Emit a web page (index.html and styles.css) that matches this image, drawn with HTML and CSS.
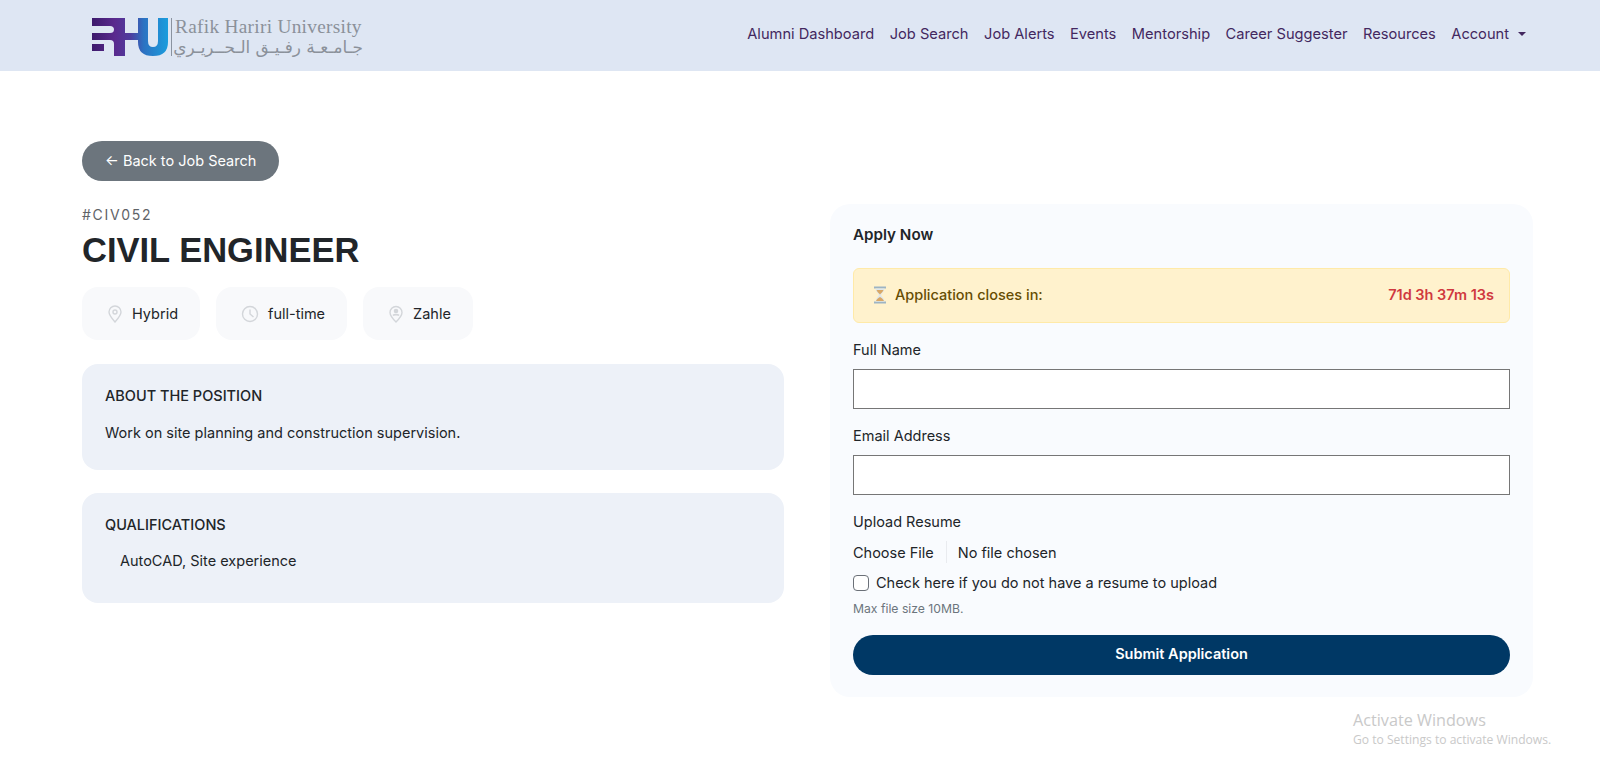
FILE: index.html
```html
<!DOCTYPE html>
<html>
<head>
    <title>Civil Engineer - Apply</title>
    <meta name="viewport" content="width=device-width, initial-scale=1">
    <link rel="stylesheet" href="styles.css">
</head>
<body>
    <nav class="navbar">
        <a class="brand" href="#">
            <svg class="brand-mark" width="76" height="38" viewBox="0 0 76 38">
                <defs>
                    <linearGradient id="rhuGrad" gradientUnits="userSpaceOnUse" x1="0" y1="0" x2="76" y2="0">
                        <stop offset="0" stop-color="#3d1a6c"/>
                        <stop offset="0.3" stop-color="#5a2a8e"/>
                        <stop offset="0.5" stop-color="#4f3b9e"/>
                        <stop offset="0.68" stop-color="#2c72c2"/>
                        <stop offset="1" stop-color="#1b9ddd"/>
                    </linearGradient>
                </defs>
                <path fill="url(#rhuGrad)" d="M0 0h33v15h13V0h10v23q0 6 5 6t5-6V0h10v24q0 14-15 14T46 24v-2H33v16H22V26q0-4-4-4H0v-7h18q4 0 4-3.500T18 8H0zM0 26h12v7H0z"/>
            </svg>
            <span class="brand-sep"></span>
            <span class="brand-text">
                <span class="brand-en">Rafik Hariri University</span>
                <span class="brand-ar" dir="rtl">جـامـعـة رفـيـق الـحــريـري</span>
            </span>
        </a>
        <ul class="nav-links">
            <li><a href="#">Alumni Dashboard</a></li>
            <li><a href="#">Job Search</a></li>
            <li><a href="#">Job Alerts</a></li>
            <li><a href="#">Events</a></li>
            <li><a href="#">Mentorship</a></li>
            <li><a href="#">Career Suggester</a></li>
            <li><a href="#">Resources</a></li>
            <li><a href="#" class="dropdown">Account</a></li>
        </ul>
    </nav>

    <main class="page">
        <a class="back-btn" href="#">← Back to Job Search</a>

        <div class="columns">
            <section class="job">
                <div class="job-code">#CIV052</div>
                <h1>CIVIL ENGINEER</h1>

                <div class="pills">
                    <div class="pill">
                        <svg width="16" height="18" viewBox="0 0 16 18" fill="none" stroke="#d3d6da" stroke-width="1.4">
                            <path d="M8 17C4 12.500 2 9.600 2 7a6 6 0 0 1 12 0c0 2.600-2 5.500-6 10z"/>
                            <circle cx="8" cy="7" r="2"/>
                        </svg>
                        Hybrid
                    </div>
                    <div class="pill">
                        <svg width="18" height="18" viewBox="0 0 18 18" fill="none" stroke="#d3d6da" stroke-width="1.4">
                            <circle cx="9" cy="9" r="7.500"/>
                            <path d="M9 4.500V9l3.500 3"/>
                        </svg>
                        full-time
                    </div>
                    <div class="pill">
                        <svg width="16" height="18" viewBox="0 0 16 18" fill="none" stroke="#d3d6da" stroke-width="1.4">
                            <path d="M8 17C4 13 2 10 2 7.500a6 6 0 0 1 12 0C14 10 12 13 8 17z"/>
                            <circle cx="8" cy="6" r="1.600" fill="#d3d6da"/>
                            <path d="M5 10.500c1-1.500 5-1.500 6 0" fill="#d3d6da"/>
                        </svg>
                        Zahle
                    </div>
                </div>

                <div class="info-card about">
                    <h3>ABOUT THE POSITION</h3>
                    <p>Work on site planning and construction supervision.</p>
                </div>

                <div class="info-card">
                    <h3>QUALIFICATIONS</h3>
                    <p class="indent">AutoCAD, Site experience</p>
                </div>
            </section>

            <section class="apply">
                <h2>Apply Now</h2>

                <div class="alert">
                    <span class="alert-label">
                        <svg width="14" height="18" viewBox="0 0 14 18">
                            <rect x="1" y="0.500" width="12" height="2" fill="#9db4c4"/>
                            <rect x="1" y="15.500" width="12" height="2" fill="#9db4c4"/>
                            <path d="M2.500 2.500h9c0 3-2.500 4.500-3.500 6.500 1 2 3.500 3.500 3.500 6.500h-9c0-3 2.500-4.500 3.500-6.500-1-2-3.500-3.500-3.500-6.500z" fill="#dfe7ea"/>
                            <path d="M3.500 4h7c-.5 2-2.500 3-3.500 4.500C6 7 4 6 3.500 4zM3 15c.3-1.500 2.500-3 4-4 1.500 1 3.700 2.500 4 4z" fill="#d9a866"/>
                        </svg>
                        Application closes in:
                    </span>
                    <span class="countdown">71d 3h 37m 13s</span>
                </div>

                <form>
                    <label for="fullName">Full Name</label>
                    <input type="text" id="fullName" class="field">

                    <label for="email">Email Address</label>
                    <input type="email" id="email" class="field">

                    <label for="resume">Upload Resume</label>
                    <input type="file" id="resume" class="file-input">

                    <label class="check-row">
                        <input type="checkbox">
                        Check here if you do not have a resume to upload
                    </label>
                    <div class="hint">Max file size 10MB.</div>

                    <button type="button" class="submit-btn">Submit Application</button>
                </form>
            </section>
        </div>
    </main>

    <div class="watermark">
        <div class="wm-title">Activate Windows</div>
        <div class="wm-sub">Go to Settings to activate Windows.</div>
    </div>
</body>
</html>
```

FILE: styles.css
```css
* {
    box-sizing: border-box;
}

html, body {
    height: 776px;
    overflow: hidden;
}

body {
    margin: 0;
    background-color: #fff;
    color: #212529;
    font-family: Inter, "Noto Sans", sans-serif;
    font-size: 15px;
    position: relative;
}

a {
    text-decoration: none;
    color: inherit;
}

.navbar {
    height: 71px;
    background-color: #dee6f3;
    display: flex;
    align-items: center;
    justify-content: space-between;
    padding: 0 74px 4px 92px;
}

.brand {
    display: flex;
    align-items: center;
    margin-top: 7px;
}

.brand-sep {
    width: 1px;
    height: 38px;
    background-color: #8a93a0;
    margin: 0 3px 0 3px;
}

.brand-text {
    display: flex;
    flex-direction: column;
    color: #8b919a;
    width: 188px;
}

.brand-en {
    font-family: "Liberation Serif", serif;
    font-size: 19.300px;
    letter-spacing: 0.3px;
    line-height: 20px;
    white-space: nowrap;
}

.brand-ar {
    font-family: "DejaVu Sans", sans-serif;
    font-size: 16.900px;
    line-height: 21px;
    white-space: nowrap;
}

.nav-links {
    display: flex;
    gap: 15.500px;
    list-style: none;
    margin: 0;
    padding: 0;
    color: #43285f;
    font-size: 14.650px;
}

.dropdown::after {
    content: "";
    display: inline-block;
    margin-left: 9px;
    vertical-align: 3px;
    border-top: 4.500px solid #43285f;
    border-left: 4.500px solid transparent;
    border-right: 4.500px solid transparent;
}

.page {
    padding: 70px 67px 0 82px;
}

.back-btn {
    display: inline-block;
    height: 40px;
    line-height: 39px;
    padding: 0 23px;
    border-radius: 20px;
    background-color: #6c757d;
    color: #fff;
    font-size: 14.500px;
}

.columns {
    display: grid;
    grid-template-columns: 702px 703px;
    gap: 46px;
    margin-top: 23px;
}

.job-code {
    font-size: 14px;
    letter-spacing: 1.700px;
    color: #5f6368;
    line-height: 20px;
    margin-top: 1px;
}

h1 {
    font-family: "Liberation Sans", Arial, sans-serif;
    font-weight: 700;
    font-size: 34.500px;
    line-height: 42px;
    margin: 4px 0 16px;
    color: #212529;
}

.pills {
    display: flex;
    gap: 16px;
    margin-bottom: 24px;
}

.pill {
    height: 53px;
    padding: 0 22px 0 25px;
    border-radius: 16px;
    background-color: #f8f9fb;
    display: flex;
    align-items: center;
    gap: 9px;
    font-size: 14.500px;
}

.info-card {
    background-color: #edf1f8;
    border-radius: 16px;
    padding: 22px 23px;
    margin-bottom: 23px;
    height: 110px;
}

.info-card.about {
    height: 106px;
}

.info-card h3 {
    font-size: 14.500px;
    font-weight: 500;
    line-height: 20px;
    margin: 0 0 17px;
}

.info-card p {
    font-size: 14.500px;
    line-height: 20px;
    margin: 0;
}

.info-card .indent {
    padding-left: 15px;
    margin-top: -1px;
}

.apply {
    background-color: #f9fbfe;
    border-radius: 20px;
    padding: 21px 23px;
    height: 493px;
}

h2 {
    font-size: 15.200px;
    font-weight: 600;
    line-height: 20px;
    margin: 0 0 23px;
}

.alert {
    height: 55px;
    display: flex;
    align-items: center;
    justify-content: space-between;
    padding: 0 15px 2px 19px;
    background-color: #fff2cd;
    border: 1px solid #ffeaa8;
    border-radius: 6px;
    color: #664d03;
    font-size: 14.500px;
    font-weight: 500;
    margin-bottom: 17px;
}

.alert-label {
    display: flex;
    align-items: center;
    gap: 8px;
}

.countdown {
    color: #d0393f;
    font-weight: 600;
}

label {
    display: block;
    font-size: 14.500px;
    line-height: 20px;
    margin-bottom: 9px;
}

.field {
    display: block;
    width: 100%;
    height: 40px;
    background-color: #fff;
    border: 1px solid #767676;
    margin-bottom: 17px;
}

.file-input {
    display: block;
    width: 100%;
    height: 22px;
    font-family: inherit;
    font-size: 14.500px;
    color: #212529;
    margin-top: 1px;
    margin-bottom: 10px;
}

.file-input::file-selector-button {
    height: 22px;
    font: inherit;
    color: #212529;
    background-color: #f9fbfe;
    border: none;
    border-right: 1px solid #e9ebef;
    padding: 0 12px 0 0;
    margin-right: 11px;
}

.check-row {
    display: flex;
    align-items: center;
    gap: 7px;
    margin-bottom: 7px;
    color: #212529;
}

.check-row input {
    appearance: none;
    width: 16px;
    height: 16px;
    margin: 0;
    background-color: #fff;
    border: 1px solid #6b7078;
    border-radius: 4px;
}

.hint {
    font-size: 12.200px;
    line-height: 18px;
    color: #6c757d;
    margin-bottom: 17px;
}

.submit-btn {
    display: block;
    width: 100%;
    height: 40px;
    padding: 0 0 3px;
    border: none;
    border-radius: 20px;
    background-color: #003865;
    color: #fff;
    font-family: inherit;
    font-size: 14.500px;
    font-weight: 600;
}

.watermark {
    position: absolute;
    left: 1353px;
    top: 710px;
    color: #c9c9c9;
    font-family: "Open Sans", sans-serif;
}

.wm-title {
    font-size: 16.200px;
    line-height: 20px;
}

.wm-sub {
    font-size: 12.100px;
    line-height: 19px;
}
```
